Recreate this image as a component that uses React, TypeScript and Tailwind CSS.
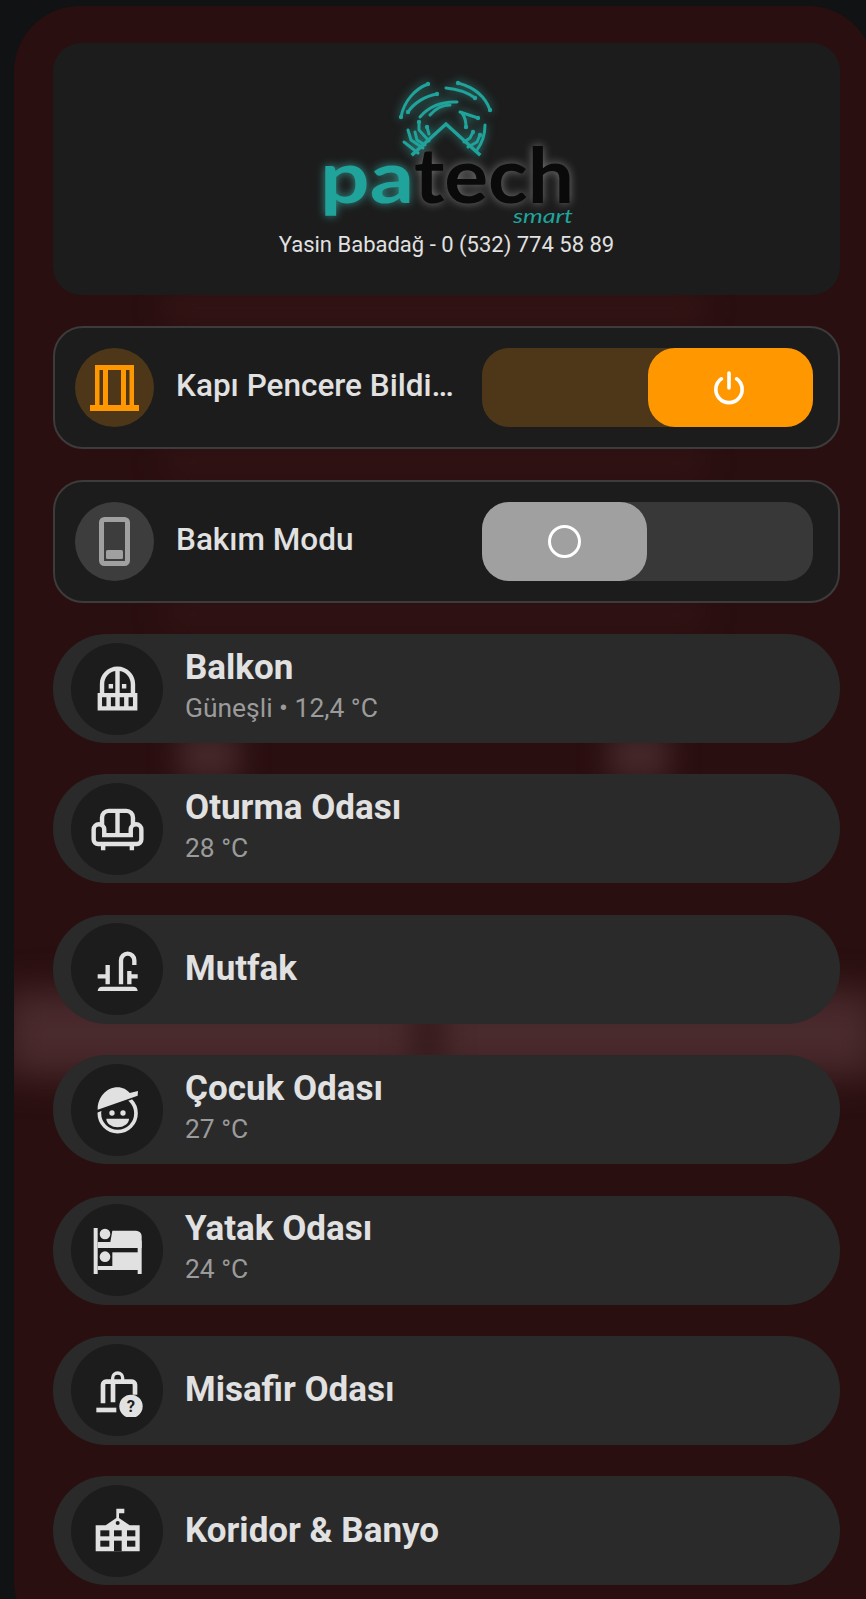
import React from 'react';

const Balcony = () => (
  <svg viewBox="0 0 24 24" className="w-[53px] h-[53px]" fill="currentColor">
    <path d="M10 10V12H8V10H10M16 12V10H14V12H16M21 14V22H3V14H4V10C4 5.58 7.58 2 12 2S20 5.58 20 10V14H21M7 16H5V20H7V16M11 16H9V20H11V16M11 4.08C8.16 4.56 6 7.03 6 10V14H11V4.08M13 14H18V10C18 7.03 15.84 4.56 13 4.08V14M15 16H13V20H15V16M19 16H17V20H19V16Z" />
  </svg>
);

const Sofa = () => (
  <svg viewBox="0 0 24 24" className="w-[53px] h-[53px]" fill="none" stroke="currentColor" strokeWidth="2">
    <path d="M5 10V7a3 3 0 0 1 3-3h8a3 3 0 0 1 3 3v3M12 4v10.500" />
    <path d="M3.200 19a2 2 0 0 1-2-2v-4.500a2.400 2.400 0 0 1 4.800 0v2.500h12v-2.500a2.400 2.400 0 0 1 4.800 0V17a2 2 0 0 1-2 2z" />
    <path d="M5.500 19v2.800M18.500 19v2.800" />
  </svg>
);

const Faucet = () => (
  <svg viewBox="0 0 159 159" className="w-[53px] h-[53px]" fill="none" stroke="currentColor" strokeWidth="13">
    <path d="M90 124V52a20 20 0 0 1 40 0v14" />
    <path d="M20 100H54M50 66V124M110 100H140M115 84V124" />
    <path d="M20 144q1-13 14-13H126q13 0 14 13z" fill="currentColor" stroke="none" />
  </svg>
);

const Kid = () => (
  <svg viewBox="0 0 159 159" className="w-[53px] h-[53px]" fill="currentColor">
    <circle cx="80" cy="91" r="55" fill="none" stroke="currentColor" strokeWidth="11" />
    <path d="M8 88 150 34" stroke="#1c1c1c" strokeWidth="9" />
    <path d="M20 78C20 45 45 13 80 13C95 13 108 20 116 30L141 24 140 38 20 80Z" />
    <circle cx="63" cy="90" r="8" />
    <circle cx="96" cy="90" r="8" />
    <path d="M46 107H114A34 26 0 0 1 46 107Z" />
  </svg>
);

const BunkBed = () => (
  <svg viewBox="0 0 159 159" className="w-[53px] h-[53px]" fill="currentColor">
    <rect x="8" y="12" width="12" height="138" />
    <rect x="140" y="50" width="12" height="100" />
    <path d="M64 20H135a17 17 0 0 1 17 17V72H20V54H58Z" />
    <circle cx="42" cy="30" r="16" />
    <circle cx="42" cy="98" r="16" />
    <rect x="64" y="85" width="78" height="42" />
    <rect x="20" y="126" width="122" height="12" />
  </svg>
);

const Suitcase = () => (
  <svg viewBox="0 0 159 159" className="w-[53px] h-[53px]" fill="none" stroke="currentColor" strokeWidth="14">
    <path d="M65 50v-8a15 15 0 0 1 30 0v8" strokeWidth="10" />
    <path d="M36 118V62a9 9 0 0 1 9-9h78a9 9 0 0 1 9 9v30M66 55v60" />
    <path d="M16 138H76" />
    <circle cx="120" cy="127" r="35" fill="currentColor" stroke="none" />
    <text x="120" y="145" textAnchor="middle" fontSize="50" fontWeight="700" fontFamily="Roboto, sans-serif" fill="#1c1c1c" stroke="none">?</text>
  </svg>
);

const School = () => (
  <svg viewBox="0 0 159 159" className="w-[53px] h-[53px]" fill="currentColor">
    <path d="M76 14H100V28H84V42L116 64H146V142H14V64H44L76 42Z" />
    <circle cx="80" cy="57" r="6" fill="#1c1c1c" />
    <g fill="#1c1c1c">
      <rect x="28" y="79" width="27" height="18" />
      <rect x="69" y="79" width="23" height="18" />
      <rect x="108" y="79" width="25" height="18" />
      <rect x="28" y="110" width="27" height="18" />
      <rect x="69" y="110" width="23" height="32" />
      <rect x="108" y="110" width="25" height="18" />
    </g>
  </svg>
);

const WindowIcon = () => (
  <svg viewBox="0 0 49 46" className="w-[49px] h-[46px]" fill="#ff9800">
    <path d="M5 0H44V40H49V46H0V40H5ZM9.500 5V40H13V5ZM18 5V40H31V5ZM36 5V40H39.500V5Z" fillRule="evenodd" />
    <rect x="13" y="18" width="5" height="3" />
    <rect x="31" y="18" width="5" height="3" />
  </svg>
);

const SwitchIcon = () => (
  <svg viewBox="0 0 31 49" className="w-[31px] h-[49px]">
    <rect x="2.500" y="2.500" width="26" height="44" rx="3" fill="none" stroke="#a0a0a0" strokeWidth="5" />
    <rect x="7" y="33" width="17" height="9" rx="1.500" fill="#a0a0a0" />
  </svg>
);

const dots = [
  [428, 84], [490, 110], [475, 98], [437, 94], [408, 112], [478, 118], [466, 127],
  [419, 122], [427, 127], [473, 132], [480, 135], [458, 83], [401, 117],
];

const Logo = () => (
  <svg viewBox="310 70 270 160" className="w-[270px] h-[160px] absolute left-[257px] top-[27px]" fill="none">
    <g className="drop-shadow-[0_0_5px_rgba(70,220,210,0.55)]" stroke="#20a39b" strokeWidth="3" strokeLinecap="round">
      <path d="M401 117C404 101 415 89 428 84" />
      <path d="M458 83C473 87 485 96 490 110" />
      <path d="M408 112C414 103 425 96 437 94" />
      <path d="M446 88C457 89 467 92 475 98" />
      <path d="M420 117C428 107 442 101 457 102" />
      <path d="M430 115C436 108 443 105 450 105" />
      <path d="M460 112L478 118" />
      <path d="M462 113C465 117 466 122 466 127" />
      <path d="M485 125C485 134 482 143 477 150" />
      <path d="M419 122V130L429 141" />
      <path d="M427 127L429 134" />
      <path d="M404 142L418 153" />
      <path d="M408 130L411 140L423 148" />
      <path d="M415 132L417 140L425 145" />
      <path d="M473 132L470 138L464 142" />
      <path d="M480 135L477 142L468 147" />
      <path d="M413 154L446 124L479 154" strokeWidth="3.500" strokeLinecap="square" />
      {dots.map(([x, y]) => (
        <circle key={`${x}-${y}`} cx={x} cy={y} r="2.200" fill="#20a39b" stroke="none" />
      ))}
    </g>
    <g fontFamily="Lato, Inter, sans-serif">
      <text x="320" y="203" fontSize="72" fontWeight="700" textLength="94" lengthAdjust="spacingAndGlyphs" fill="#20a39b" className="drop-shadow-[0_0_5px_rgba(70,220,210,0.6)]">pa</text>
      <text x="414" y="203" fontSize="76" fontWeight="700" textLength="160" lengthAdjust="spacingAndGlyphs" fill="#0a0a0a" className="drop-shadow-[0_0_5px_rgba(255,255,255,0.4)]">tech</text>
      <text x="513" y="223" fontSize="20" fontStyle="italic" textLength="60" lengthAdjust="spacingAndGlyphs" fill="#20a39b">smart</text>
    </g>
  </svg>
);

const rooms = [
  { name: 'Balkon', info: 'Güneşli • 12,4 °C', icon: <Balcony /> },
  { name: 'Oturma Odası', info: '28 °C', icon: <Sofa /> },
  { name: 'Mutfak', icon: <Faucet /> },
  { name: 'Çocuk Odası', info: '27 °C', icon: <Kid /> },
  { name: 'Yatak Odası', info: '24 °C', icon: <BunkBed /> },
  { name: 'Misafir Odası', icon: <Suitcase /> },
  { name: 'Koridor & Banyo', icon: <School /> },
];

const RoomRow = ({ name, info, icon }: { name: string; info?: string; icon: React.ReactNode }) => (
  <div className="h-[109px] shrink-0 rounded-[54px] bg-[#2a2a2a] flex items-center pl-[18px]">
    <div className="w-[92px] h-[92px] rounded-full bg-[#1c1c1c] text-[#e1e1e1] flex items-center justify-center shrink-0">
      {icon}
    </div>
    <div className="ml-[22px] flex flex-col">
      <span className="text-[35px] leading-[38px] font-bold text-[#e1e1e1]">{name}</span>
      {info && <span className="text-[26.400px] leading-[42px] text-[#9b9b9b]">{info}</span>}
    </div>
  </div>
);

export default function App() {
  return (
    <div className="relative w-[866px] h-[1599px] overflow-hidden bg-[#111213] font-['Roboto',sans-serif]">
      <div className="absolute left-[14px] top-[6px] w-[860px] h-[1640px] rounded-[66px] bg-[#2a0f10] overflow-hidden">
        <div className="absolute left-[-10px] right-[-4px] top-[985px] h-[85px] bg-[#4a2a2d] blur-[18px]" />
        <div className="absolute left-[398px] top-[995px] w-[32px] h-[70px] bg-[#351a1c] blur-[14px]" />
        <div className="absolute left-[165px] top-[725px] w-[60px] h-[50px] bg-[#45282a] blur-[14px]" />
        <div className="absolute left-[595px] top-[725px] w-[60px] h-[50px] bg-[#45282a] blur-[14px]" />
        <div className="absolute left-[150px] top-[290px] w-[540px] h-[24px] bg-[#361516] blur-[14px]" />
        <div className="absolute left-[150px] top-[446px] w-[540px] h-[22px] bg-[#331415] blur-[14px]" />
        <div className="absolute left-[150px] top-[598px] w-[540px] h-[22px] bg-[#331415] blur-[14px]" />
      </div>

      <div className="relative pt-[43px] pl-[53px] w-[840px] flex flex-col">
        <div className="relative h-[252px] rounded-[28px] bg-[#1c1c1c] shrink-0">
          <Logo />
          <div className="absolute inset-x-0 top-[188px] text-center text-[22px] leading-[28px] text-[#e1e1e1]">
            Yasin Babadağ - 0 (532) 774 58 89
          </div>
        </div>

        <div className="mt-[31px] h-[123px] rounded-[30px] border-2 border-[#3d3b3b] bg-[#1c1c1c] flex items-center pl-[20px] pr-[25px] shrink-0">
          <div className="w-[79px] h-[79px] rounded-full bg-[#4d3718] flex items-center justify-center shrink-0">
            <WindowIcon />
          </div>
          <div className="ml-[22px] w-[306px] -mt-[3px] text-[31.500px] font-medium text-[#e1e1e1] whitespace-nowrap">
            Kapı Pencere Bildi…
          </div>
          <div className="w-[331px] h-[79px] rounded-[27px] bg-[#4d3718] flex justify-end shrink-0">
            <div className="w-[165px] h-[79px] rounded-[27px] bg-[#ff9800] flex items-center justify-center text-white pr-[4px]">
              <svg viewBox="0 0 24 24" className="w-[38px] h-[38px]" fill="none" stroke="currentColor" strokeWidth="2.300" strokeLinecap="round">
                <path d="M12 2.500V12M7.200 6.200a8.300 8.300 0 1 0 9.600 0" />
              </svg>
            </div>
          </div>
        </div>

        <div className="mt-[31px] h-[123px] rounded-[30px] border-2 border-[#3d3b3b] bg-[#1c1c1c] flex items-center pl-[20px] pr-[25px] shrink-0">
          <div className="w-[79px] h-[79px] rounded-full bg-[#3d3d3d] flex items-center justify-center shrink-0">
            <SwitchIcon />
          </div>
          <div className="ml-[22px] w-[306px] -mt-[3px] text-[31.500px] font-medium text-[#e1e1e1] whitespace-nowrap">
            Bakım Modu
          </div>
          <div className="w-[331px] h-[79px] rounded-[27px] bg-[#383838] flex shrink-0">
            <div className="w-[165px] h-[79px] rounded-[27px] bg-[#a0a0a0] flex items-center justify-center">
              <div className="w-[33px] h-[33px] rounded-full border-[3.500px] border-white" />
            </div>
          </div>
        </div>

        <div className="mt-[31px] flex flex-col gap-[31.400px]">
          {rooms.map(r => (
            <RoomRow key={r.name} name={r.name} info={r.info} icon={r.icon} />
          ))}
        </div>
      </div>
    </div>
  );
}
